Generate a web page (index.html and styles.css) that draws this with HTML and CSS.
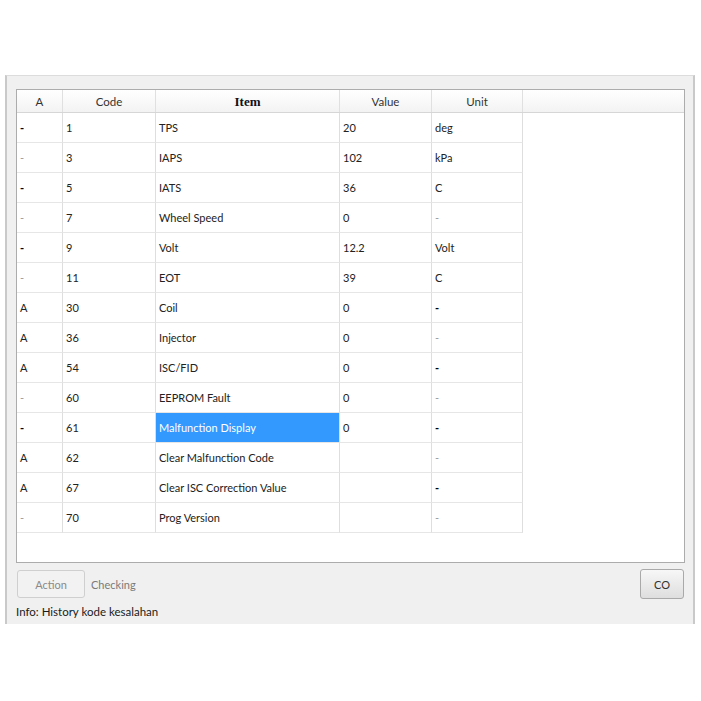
FILE: index.html
```html
<!DOCTYPE html>
<html>
<head>
<meta charset="utf-8">
<link rel="stylesheet" href="styles.css">
</head>
<body>
<div class="window">
  <div class="frame">
    <div class="head">
      <div class="hc">A</div>
      <div class="hc">Code</div>
      <div class="hc item">Item</div>
      <div class="hc">Value</div>
      <div class="hc">Unit</div>
      <div class="hc last"></div>
    </div>
    <div class="rows">
      <div class="row"><div class="c dk">-</div><div class="c">1</div><div class="c">TPS</div><div class="c">20</div><div class="c">deg</div></div>
      <div class="row"><div class="c lt">-</div><div class="c">3</div><div class="c">IAPS</div><div class="c">102</div><div class="c">kPa</div></div>
      <div class="row"><div class="c dk">-</div><div class="c">5</div><div class="c">IATS</div><div class="c">36</div><div class="c">C</div></div>
      <div class="row"><div class="c lt">-</div><div class="c">7</div><div class="c">Wheel Speed</div><div class="c">0</div><div class="c lt">-</div></div>
      <div class="row"><div class="c dk">-</div><div class="c">9</div><div class="c">Volt</div><div class="c">12.2</div><div class="c">Volt</div></div>
      <div class="row"><div class="c lt">-</div><div class="c">11</div><div class="c">EOT</div><div class="c">39</div><div class="c">C</div></div>
      <div class="row"><div class="c">A</div><div class="c">30</div><div class="c">Coil</div><div class="c">0</div><div class="c dk">-</div></div>
      <div class="row"><div class="c">A</div><div class="c">36</div><div class="c">Injector</div><div class="c">0</div><div class="c lt">-</div></div>
      <div class="row"><div class="c">A</div><div class="c">54</div><div class="c">ISC/FID</div><div class="c">0</div><div class="c dk">-</div></div>
      <div class="row"><div class="c lt">-</div><div class="c">60</div><div class="c">EEPROM Fault</div><div class="c">0</div><div class="c lt">-</div></div>
      <div class="row"><div class="c dk">-</div><div class="c">61</div><div class="c sel">Malfunction Display</div><div class="c">0</div><div class="c dk">-</div></div>
      <div class="row"><div class="c">A</div><div class="c">62</div><div class="c">Clear Malfunction Code</div><div class="c"></div><div class="c lt">-</div></div>
      <div class="row"><div class="c">A</div><div class="c">67</div><div class="c">Clear ISC Correction Value</div><div class="c"></div><div class="c dk">-</div></div>
      <div class="row"><div class="c lt">-</div><div class="c">70</div><div class="c">Prog Version</div><div class="c"></div><div class="c lt">-</div></div>
    </div>
  </div>
  <div class="controls">
    <div class="btn action">Action</div>
    <div class="status">Checking</div>
    <div class="spacer"></div>
    <div class="btn co">CO</div>
  </div>
  <div class="info">Info: History kode kesalahan</div>
</div>
</body>
</html>
```
FILE: styles.css
```css
html, body {
  margin: 0;
  padding: 0;
  background: #ffffff;
}
body {
  font-family: Lato, "Open Sans", sans-serif;
  font-size: 11px;
  color: #222;
}
.window {
  margin: 75px 0 0 5px;
  width: 690px;
  height: 549px;
  box-sizing: border-box;
  background: #f0f0f0;
  border-left: 2px solid #c9c9c9;
  border-right: 2px solid #c9c9c9;
  border-top: 1px solid #dcdcdc;
  padding: 13px 8px 0 9px;
  display: flex;
  flex-direction: column;
}
.frame {
  height: 474px;
  box-sizing: border-box;
  border: 1px solid #acacac;
  background: #fff;
  display: flex;
  flex-direction: column;
}
.head {
  display: grid;
  grid-template-columns: 46px 93px 184px 92px 91px 1fr;
  height: 23px;
  box-sizing: border-box;
  border-bottom: 1px solid #d6d6d6;
  background: linear-gradient(#ffffff, #f3f3f3);
}
.hc {
  border-right: 1px solid #e0e0e0;
  display: flex;
  align-items: center;
  justify-content: center;
  color: #333;
  font-size: 11.5px;
  padding-top: 1px;
}
.hc.last { border-right: none; }
.hc.item {
  font-family: "Liberation Serif", serif;
  font-weight: bold;
  font-size: 13px;
  color: #111;
}
.rows {
  display: flex;
  flex-direction: column;
}
.row {
  display: grid;
  grid-template-columns: 46px 93px 184px 92px 91px;
  height: 30px;
}
.c {
  box-sizing: border-box;
  border-right: 1px solid #dedede;
  border-bottom: 1px solid #e6e6e6;
  display: flex;
  align-items: center;
  padding-left: 3px;
  color: #222;
  white-space: nowrap;
}
.c.dk { font-weight: 900; color: #000; }
.c.lt { color: #999; }
.c.sel {
  background: #3399ff;
  color: #fff;
}
.controls {
  display: flex;
  align-items: center;
  margin-top: 6px;
  height: 30px;
}
.btn {
  box-sizing: border-box;
  display: flex;
  align-items: center;
  justify-content: center;
  border-radius: 3px;
}
.action {
  width: 68px;
  height: 28px;
  border: 1px solid #cfcfcf;
  background: #f2f2f2;
  color: #8a8a8a;
  margin-left: 1px;
}
.status {
  margin-left: 6px;
  color: #7a7a7a;
}
.spacer { flex: 1; }
.co {
  width: 44px;
  height: 30px;
  border: 1px solid #a9a9a9;
  background: linear-gradient(#f7f7f7, #dedede);
  color: #333;
  margin-right: 1px;
}
.info {
  margin-top: 6px;
  font-size: 11.5px;
  color: #1a1a1a;
}
```
